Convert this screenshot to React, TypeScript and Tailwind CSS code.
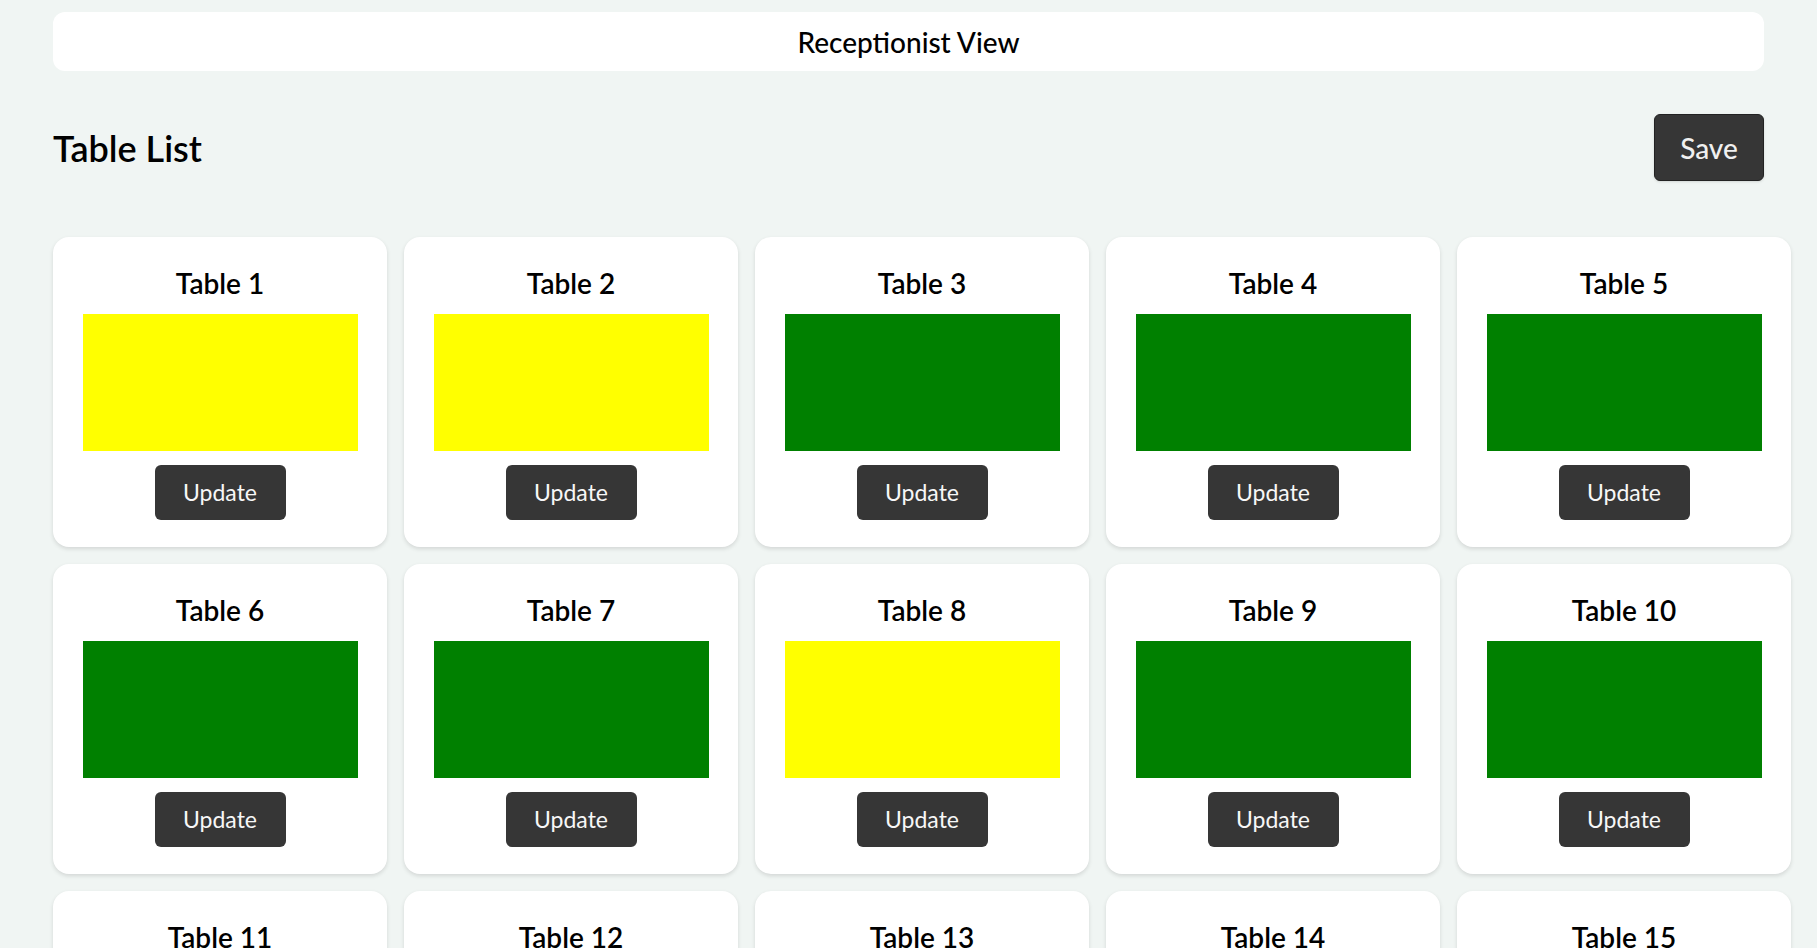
const tables = [
  { id: 1, busy: true },
  { id: 2, busy: true },
  { id: 3, busy: false },
  { id: 4, busy: false },
  { id: 5, busy: false },
  { id: 6, busy: false },
  { id: 7, busy: false },
  { id: 8, busy: true },
  { id: 9, busy: false },
  { id: 10, busy: false },
  { id: 11, busy: false },
  { id: 12, busy: false },
  { id: 13, busy: false },
  { id: 14, busy: false },
  { id: 15, busy: false },
];

const TableCard = ({ id, busy }: { id: number; busy: boolean }) => {
  return (
    <div className="w-[334px] h-[310px] bg-white rounded-2xl shadow-[0_2px_4px_rgba(0,0,0,0.12)] flex flex-col items-center pt-[29px]">
      <h3 className="text-[28px] leading-[34px] font-semibold text-black">Table {id}</h3>
      <div className={`mt-[14px] w-[275px] h-[137px] ${busy ? "bg-[#ffff00]" : "bg-[#008000]"}`}></div>
      <button className="mt-[14px] w-[131px] h-[55px] rounded-md bg-[#363636] text-[#f7f7f7] text-[23px] font-normal">
        Update
      </button>
    </div>
  );
};

export default function App() {
  return (
    <div className="min-h-screen bg-[#f0f5f3] px-[53px] pt-[12px] pb-10 font-['Lato',sans-serif] text-black">
      <div className="h-[59px] bg-white rounded-xl flex items-center justify-center">
        <span className="text-[28px] font-medium">Receptionist View</span>
      </div>

      <div className="mt-[43px] flex items-center justify-between">
        <h2 className="text-[36px] font-semibold">Table List</h2>
        <button className="w-[110px] h-[67px] rounded-md bg-[#363636] border border-[#222] text-[#f0f0f0] text-[28px] font-medium shadow-sm">
          Save
        </button>
      </div>

      <div className="mt-[56px] grid grid-cols-[repeat(5,334px)] gap-[17px]">
        {tables.map((t) => (
          <TableCard key={t.id} id={t.id} busy={t.busy} />
        ))}
      </div>
    </div>
  );
}
